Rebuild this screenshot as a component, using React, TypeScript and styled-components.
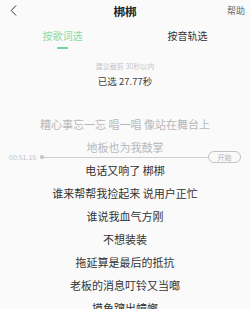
import React from "react";
import styled, { createGlobalStyle } from "styled-components";

const Global = createGlobalStyle`
  html, body { margin: 0; padding: 0; background: #fafafa; }
  body { font-family: "Noto Sans CJK SC", "Noto Sans", sans-serif; overflow: hidden; }
`;

const Page = styled.div`
  width: 250px;
  height: 309px;
  background: #fafafa;
  display: flex;
  flex-direction: column;
  overflow: hidden;
`;

const Header = styled.div`
  height: 21px;
  flex-shrink: 0;
  display: grid;
  grid-template-columns: 1fr auto 1fr;
  align-items: center;
`;

const Back = styled.div`
  padding-left: 10px;
  display: flex;
  align-items: center;
`;

const Title = styled.div`
  font-size: 11.5px;
  font-weight: 700;
  color: #222;
  line-height: 14px;
`;

const Help = styled.div`
  justify-self: end;
  padding-right: 5px;
  font-size: 9px;
  color: #666;
  line-height: 12px;
`;

const Tabs = styled.div`
  height: 30px;
  flex-shrink: 0;
  display: grid;
  grid-template-columns: 1fr 1fr;
`;

const Tab = styled.div<{ $active?: boolean }>`
  display: flex;
  flex-direction: column;
  align-items: center;
  padding-top: 8px;
  gap: 4px;
  font-size: 10px;
  line-height: 14px;
  color: ${(p) => (p.$active ? "#86d9a8" : "#333")};
`;

const Underline = styled.div<{ $active?: boolean }>`
  width: 11px;
  height: 2px;
  border-radius: 1px;
  background: ${(p) => (p.$active ? "#6fd49a" : "transparent")};
`;

const Hint = styled.div`
  margin-top: 10px;
  flex-shrink: 0;
  text-align: center;
  font-size: 7px;
  line-height: 10px;
  color: #c6c6c6;
`;

const Selected = styled.div`
  margin-top: 4px;
  flex-shrink: 0;
  text-align: center;
  font-size: 9.5px;
  line-height: 12px;
  color: #444;
`;

const Lyrics = styled.div`
  position: relative;
  margin-top: 26px;
  display: flex;
  flex-direction: column;
  align-items: center;
  flex-shrink: 0;
`;

const Line = styled.div<{ $dim?: boolean }>`
  height: 23px;
  line-height: 23px;
  font-size: 11px;
  white-space: nowrap;
  flex-shrink: 0;
  color: ${(p) => (p.$dim ? "#b8b8b8" : "#333")};
`;

const Timeline = styled.div`
  position: absolute;
  left: 9px;
  right: 9px;
  top: 38px;
  height: 12px;
  display: flex;
  align-items: center;
`;

const Time = styled.span`
  font-size: 7px;
  color: #c2c2c2;
  line-height: 10px;
  margin-right: 4px;
`;

const Dot = styled.span`
  width: 4px;
  height: 4px;
  border-radius: 50%;
  background: #c2c2c2;
`;

const Track = styled.span`
  flex: 1;
  height: 1px;
  background: #cfcfcf;
`;

const Pill = styled.span`
  width: 31px;
  height: 10px;
  border: 1px solid #c2c2c2;
  border-radius: 6px;
  font-size: 7px;
  line-height: 10px;
  color: #b0b0b0;
  text-align: center;
  background: #fafafa;
`;

const lines: { t: string; dim?: boolean }[] = [
  { t: "糟心事忘一忘 唱一唱 像站在舞台上", dim: true },
  { t: "地板也为我鼓掌", dim: true },
  { t: "电话又响了 梆梆" },
  { t: "谁来帮帮我捡起来 说用户正忙" },
  { t: "谁说我血气方刚" },
  { t: "不想装装" },
  { t: "拖延算是最后的抵抗" },
  { t: "老板的消息叮铃又当啷" },
  { t: "摸鱼蹿出蟑螂" },
];

export default function App() {
  return (
    <Page>
      <Global />
      <Header>
        <Back>
          <svg width="7" height="11" viewBox="0 0 7 11" fill="none">
            <path d="M5.8 0.8 L1.2 5.5 L5.8 10.2" stroke="#333" strokeWidth="1" strokeLinecap="round" strokeLinejoin="round" />
          </svg>
        </Back>
        <Title>梆梆</Title>
        <Help>帮助</Help>
      </Header>
      <Tabs>
        <Tab $active>
          按歌词选
          <Underline $active />
        </Tab>
        <Tab>
          按音轨选
          <Underline />
        </Tab>
      </Tabs>
      <Hint>建议截剪 30秒以内</Hint>
      <Selected>已选 27.77秒</Selected>
      <Lyrics>
        {lines.map((l, i) => (
          <Line key={i} $dim={l.dim}>
            {l.t}
          </Line>
        ))}
        <Timeline>
          <Time>00:51.15</Time>
          <Dot />
          <Track />
          <Pill>开始</Pill>
        </Timeline>
      </Lyrics>
    </Page>
  );
}
